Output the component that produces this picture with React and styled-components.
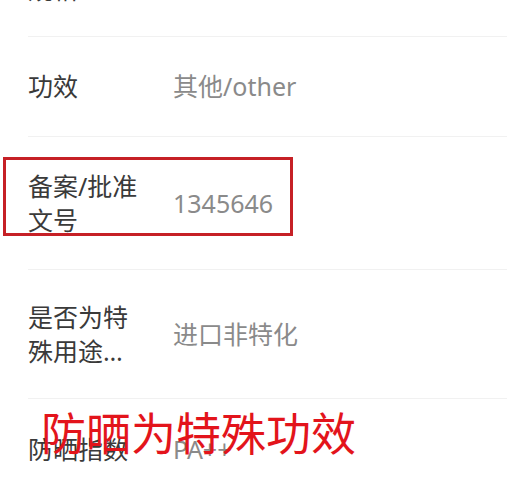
import React from "react";
import styled, { createGlobalStyle } from "styled-components";

const Global = createGlobalStyle`
  html, body { margin: 0; padding: 0; background: #ffffff; }
  body { font-family: "Noto Sans", "Noto Sans CJK SC", sans-serif; overflow: hidden; }
`;

const Page = styled.div`
  width: 507px;
  height: 477px;
  overflow: hidden;
  background: #fff;
`;

const List = styled.div`
  margin-top: -63px;
  padding-left: 28px;
  display: flex;
  flex-direction: column;
`;

const Row = styled.div`
  position: relative;
  display: flex;
  align-items: center;
  padding: ${(p) => p.$pad};
  border-bottom: 1px solid #f1f1f1;
  font-size: 25px;
  line-height: 34px;
`;

const Label = styled.div`
  flex: 0 0 112px;
  width: 112px;
  margin-right: 33px;
  color: #3a3a3a;
  display: -webkit-box;
  -webkit-box-orient: vertical;
  -webkit-line-clamp: 2;
  overflow: hidden;
  word-break: break-all;
`;

const Value = styled.div`
  color: #8a8a8a;
  flex: 1;
`;

const Highlight = styled.div`
  position: absolute;
  left: -25px;
  top: 20px;
  width: 284px;
  height: 73px;
  border: 3px solid #c62026;
  pointer-events: none;
`;

const Annotation = styled.div`
  position: absolute;
  left: 13px;
  top: 6px;
  font-family: "Noto Sans CJK SC", sans-serif;
  font-size: 45px;
  line-height: 54px;
  color: #e3141b;
  white-space: nowrap;
  pointer-events: none;
`;

const rows = [
  { label: "规格", value: "50ml", pad: "35px 0 30px" },
  { label: "功效", value: "其他/other", pad: "32px 0 33px" },
  { label: "备案/批准文号", value: "1345646", pad: "32px 0", boxed: true },
  { label: "是否为特殊用途化妆品", value: "进口非特化", pad: "30px 0" },
  { label: "防晒指数", value: "PA++", pad: "33px 0", note: "防晒为特殊功效" },
];

export default function App() {
  return (
    <Page>
      <Global />
      <List>
        {rows.map((r) => (
          <Row key={r.label} $pad={r.pad}>
            <Label>{r.label}</Label>
            <Value>{r.value}</Value>
            {r.boxed && <Highlight />}
            {r.note && <Annotation>{r.note}</Annotation>}
          </Row>
        ))}
      </List>
    </Page>
  );
}
